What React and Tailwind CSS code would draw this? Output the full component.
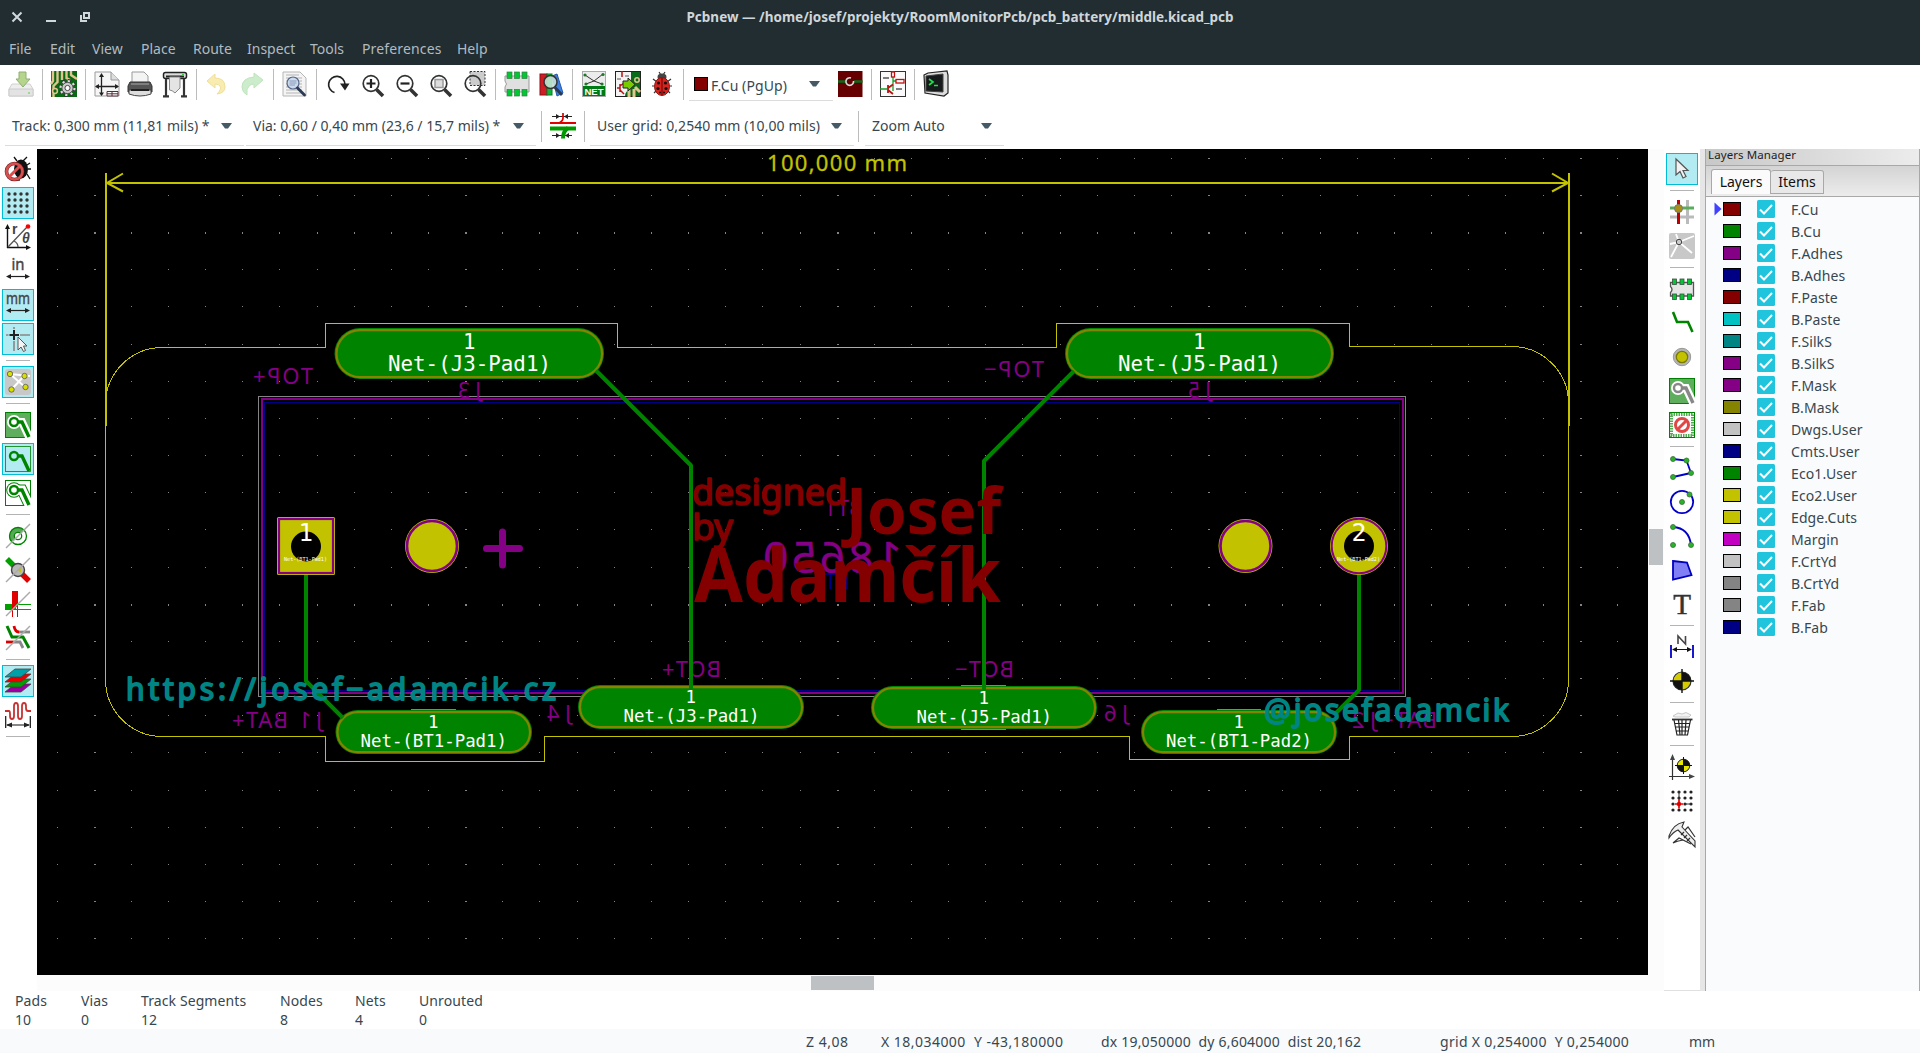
import React from "react";

const G = "#008400";
const Y = "#c2c200";
const P = "#840084";

/* ---------- small icon helpers ---------- */
function Ic({ children, s = 26 }) {
  return (
    <svg width={s} height={s} viewBox="0 0 26 26" fill="none" className="shrink-0 overflow-visible">
      {children}
    </svg>
  );
}
const HSlot = ({ children }) => <div className="flex h-[34px] w-[34px] shrink-0 items-center justify-center">{children}</div>;
const HSep = () => <div className="flex w-[9px] shrink-0 justify-center"><div className="h-[31px] w-px bg-[#bcbcbc]" /></div>;
const VSep = () => <div className="flex h-[9px] shrink-0 items-center justify-center"><div className="h-px w-6 bg-[#b4b4b4]" /></div>;
const VSlot = ({ children, on }) => (
  <div className="flex h-[34px] w-full shrink-0 items-center justify-center">
    <div className={on ? "flex h-8 w-8 items-center justify-center border border-[#00bcd4] bg-[#b2ebf2]" : "flex h-8 w-8 items-center justify-center"}>
      {children}
    </div>
  </div>
);
const Arrow = () => (
  <svg width="11" height="6" viewBox="0 0 11 6" className="shrink-0"><path d="M0 0H11L7 5.5H4Z" fill="#455a64" /></svg>
);

/* ---------- top toolbar icons ---------- */
const Save = () => (
  <Ic>
    <path d="M4 13H22L25 18V25H1V18Z" fill="#eee" stroke="#d0d0d0" />
    <path d="M1 18H25V25H1Z" fill="#e3e3e3" stroke="#ccc" />
    <path d="M11 1H18V8H22L15 16L8 8H11Z" fill="#b5d58c" stroke="#8fae70" />
    <rect x="20" y="21" width="2" height="2" fill="#9edb8e" />
  </Ic>
);
const BoardSetup = () => (
  <Ic>
    <rect width="26" height="26" fill="#0a6a14" />
    <path d="M2 0V10L0 13M6.500 0V11L2.500 15V26M11 0V9M15.500 0V7L19 9M20 0V4L26 8" stroke="#e2c48f" strokeWidth="2.400" />
    <circle cx="4" cy="20" r="2.400" fill="#0a6a14" stroke="#e2c48f" strokeWidth="1.500" />
    <circle cx="16.500" cy="17" r="7" stroke="#333" strokeWidth="4" strokeDasharray="3 2.500" />
    <circle cx="16.500" cy="17" r="6.800" stroke="#ddd" strokeWidth="2.600" strokeDasharray="2.200 3.140" />
    <circle cx="16.500" cy="17" r="5.600" fill="#ccc" stroke="#555" />
    <circle cx="16.500" cy="17" r="2.600" fill="#fff" stroke="#444" />
  </Ic>
);
const PageIc = () => (
  <Ic>
    <path d="M1 1H17L25 9V25H1Z" fill="#f6f6f6" stroke="#999" />
    <path d="M17 1V9H25" fill="#ddd" stroke="#999" />
    <path d="M7.500 4V24M2 15.500H24" stroke="#222" strokeWidth="1.300" />
    <path d="M7.500 2L5 6H10ZM7.500 25L5 21.500H10ZM1 15.500L5 13V18ZM25 15.500L21 13V18Z" fill="#222" />
    <path d="M13 20.500H24V25H13ZM13 22.800H24M18 20.500V25" stroke="#5a2a3a" fill="#fff" />
  </Ic>
);
const Printer = () => (
  <Ic>
    <path d="M4 12V1H16L20 5V12Z" fill="#f4f4f4" stroke="#999" />
    <path d="M2 11H22L24 15V21H0V15Z" fill="#555" stroke="#333" />
    <path d="M3 13H21" stroke="#aaa" />
    <path d="M1 19H23V23Q12 27 1 23Z" fill="#ddd" stroke="#444" />
    <path d="M3 19H21" stroke="#222" strokeWidth="2" />
  </Ic>
);
const Plotter = () => (
  <Ic>
    <rect x="1.500" y="1.500" width="23" height="6" rx="2" fill="#ddd" stroke="#222" strokeWidth="1.500" />
    <path d="M4 5.500H22" stroke="#222" strokeWidth="2" />
    <path d="M4 8V25M22 8V25M1 25.300H7M19 25.300H25" stroke="#333" strokeWidth="2.200" />
    <path d="M7.500 6H18V17L13 22Q10 19 7.500 19Z" fill="#e4e4e4" stroke="#888" />
    <rect x="20" y="3" width="2" height="2" fill="#3c3" />
  </Ic>
);
const Undo = () => (
  <Ic>
    <path d="M2 10L10 3V7Q20 7 20 16Q20 22 12 23Q17 18 15 15Q14 13 10 13V17Z" fill="#f8ecb0" stroke="#efdf98" />
  </Ic>
);
const Redo = () => (
  <Ic>
    <path d="M24 9L15 2V6Q3 7 3 16Q3 21 8 24Q7 18 10 15Q12 13 15 13V17Z" fill="#cdeccb" stroke="#bfe3bd" />
  </Ic>
);
const FindIc = () => (
  <Ic>
    <path d="M1 1H18L24 7V25H1Z" fill="#f4f4f4" stroke="#b5b5b5" />
    <path d="M4 4H17M4 7H20M4 10H20M4 13H20M4 16H20M4 19H20M4 22H20" stroke="#b4b4b4" />
    <circle cx="11" cy="12" r="6" fill="#c9d8ee" fillOpacity=".9" stroke="#56678a" strokeWidth="1.200" />
    <path d="M7.500 10H14.500M7.500 12H14.500M7.500 14H13" stroke="#8a9cbd" />
    <path d="M15.500 17L22.500 24" stroke="#2a3a55" strokeWidth="2.800" strokeLinecap="round" />
  </Ic>
);
const Redraw = () => (
  <Ic>
    <path d="M9.500 21.500A8.200 8.200 0 1 1 20 13.500" stroke="#222" strokeWidth="1.700" />
    <path d="M15 12.500H24.500L20 19.500Z" fill="#222" />
  </Ic>
);
const Mag = ({ kind }) => (
  <Ic>
    <g transform="translate(1.500 0)">
      {kind === "sel" && <rect x="7.500" y=".5" width="15" height="14" fill="#ccc" stroke="#333" strokeDasharray="2 1.500" />}
      <circle cx="10.500" cy="12.500" r="7.800" fill={kind === "sel" ? "none" : "#fff"} stroke="#333" strokeWidth="1.700" />
      {kind === "in" && <path d="M6 12.500H15M10.500 8V17" stroke="#222" strokeWidth="2.200" />}
      {kind === "out" && <path d="M6 12.500H15" stroke="#222" strokeWidth="2.200" />}
      {kind === "fit" && <rect x="6.500" y="8.500" width="8" height="8" fill="#ddd" stroke="#999" strokeWidth="1.500" />}
      <path d="M16 18.500L22.500 25" stroke="#333" strokeWidth="3.600" />
    </g>
  </Ic>
);
const Chip = () => (
  <Ic>
    <path d="M1.500 6.500H24.500V20H1.500V16.500Q4.500 13.500 1.500 10.500Z" fill="#e6e6e6" stroke="#555" strokeWidth="1.300" />
    {[3.500, 11, 18.500].map((x) => (
      <g key={x} fill="#00c832" stroke="#38503f" strokeWidth=".8"><rect x={x} y="3" width="4" height="5.500" /><rect x={x} y="18" width="4" height="5.500" /></g>
    ))}
  </Ic>
);
const FpChip = () => (
  <Ic>
    <path d="M1 5H25V21H1V16Q4 13 1 10Z" fill="#e0e0e0" stroke="#999" />
    {[3, 10.500, 18].map((x) => (
      <g key={x} fill="#00c832" stroke="#3b7a48" strokeWidth=".7"><rect x={x} y="1" width="5" height="6.500" /><rect x={x} y="18.500" width="5" height="6.500" /></g>
    ))}
  </Ic>
);
const Lib = () => (
  <Ic>
    <rect x="2" y="3" width="7" height="21" fill="#d11c24" stroke="#8a1016" />
    <rect x="9" y="3" width="5" height="21" fill="#11b43a" stroke="#0a7a26" />
    <path d="M14 5L19 3L25 22L19 25Z" fill="#3d7fe0" stroke="#2458a8" />
    <circle cx="12.500" cy="11" r="6.500" fill="#cfe6dc" fillOpacity=".85" stroke="#333" strokeWidth="1.500" />
    <path d="M17 16.500L24 24" stroke="#2a3a55" strokeWidth="3" />
  </Ic>
);
const NetIc = () => (
  <Ic>
    <rect x="1.500" y=".5" width="23" height="25" fill="#ececec" stroke="#aaa" />
    <path d="M4 4L13 10L22 3M13 10L5 13M13 10L21 13" stroke="#333" />
    <g fill="#1a7a2a"><circle cx="4" cy="4" r="1.600" /><circle cx="22" cy="3.500" r="1.600" /><circle cx="5" cy="13" r="1.600" /><circle cx="21" cy="13" r="1.600" /></g>
    <rect x="2" y="15" width="22" height="10" fill="#007a14" />
    <text x="13" y="23.500" fontSize="9.500" textAnchor="middle" fill="#fff" fontFamily="Liberation Sans" fontWeight="bold">NET</text>
  </Ic>
);
const Update = () => (
  <Ic>
    <rect x=".5" y=".5" width="25" height="25" fill="#f4f4f4" stroke="#222" />
    <path d="M16 1H25V25H10Q10 20 16 18Z" fill="#076b17" />
    <path d="M14 19V26M19 18V26M25 21L20 16" stroke="#e2c48f" strokeWidth="3" />
    <path d="M7 0V6M2 17H5M5 13V21M5 15L9 12M5 19L9 23" stroke="#b11" strokeWidth="1.500" />
    <path d="M2 8H6M10 5H14" stroke="#555" />
    <path d="M8 10H13V7L20 13.500L13 20V17H8Z" fill="#7c0" stroke="#222" />
    <circle cx="22" cy="9" r="2.200" stroke="#e2c48f" strokeWidth="1.500" />
  </Ic>
);
const Bug = () => (
  <Ic>
    <path d="M4 8L8 11M22 8L18 11M3 15H8M23 15H18M5 22L8 19M21 22L18 19M10 1L12 4M16 1L14 4" stroke="#333" strokeWidth="1.200" />
    <ellipse cx="13" cy="6" rx="4.500" ry="3.500" fill="#444" />
    <ellipse cx="13" cy="15.500" rx="7.500" ry="9" fill="#d8241f" stroke="#8c1512" />
    <path d="M13 7V24" stroke="#600" />
    <g fill="#111"><circle cx="9.500" cy="12" r="1.600" /><circle cx="16.500" cy="12" r="1.600" /><circle cx="9" cy="17.500" r="1.600" /><circle cx="17" cy="17.500" r="1.600" /><circle cx="11" cy="21.500" r="1" /><circle cx="15" cy="21.500" r="1" /></g>
  </Ic>
);
const LayerPair = () => (
  <Ic>
    <rect x="1" y="0" width="24.500" height="26" fill="#660000" />
    <path d="M1 10.500H9M17 10.500H25.500" stroke="#0a6a1a" strokeWidth="2.500" />
    <path d="M14 7A3.800 3.800 0 1 0 16.500 10" stroke="#d8d8d8" strokeWidth="1.600" />
  </Ic>
);
const Schematic = () => (
  <Ic>
    <rect x=".5" y=".5" width="25" height="25" fill="#fafafa" stroke="#333" />
    <path d="M13 0V20M0 18H7M13 10H24" stroke="#1a9a2a" strokeWidth="1.300" />
    <rect x="11.500" y="1" width="3" height="5" fill="#fff" stroke="#b11" strokeWidth="1.300" />
    <rect x="16" y="8.500" width="8" height="3.500" fill="#fff" stroke="#b11" strokeWidth="1.300" />
    <path d="M8 14V22M8 17L13 13.500M8 19L13 23" stroke="#b11" strokeWidth="1.800" />
    <path d="M3 7H9M16 18H22" stroke="#555" strokeWidth="1.300" />
  </Ic>
);
const Term = () => (
  <Ic>
    <path d="M1 4L5 2L24 0L25 4V22L21 25L2 22Z" fill="#ddd" stroke="#222" strokeWidth="1.200" />
    <path d="M3 5L20 3V21L3 20Z" fill="#161a1b" stroke="#444" />
    <path d="M6 8L10 11L6 14M11 14.500H15" stroke="#1ee04a" strokeWidth="1.700" />
  </Ic>
);
const TrackW = () => (
  <Ic>
    <path d="M2 3.500H22M2 22.500H22" stroke="#222" />
    <path d="M10 3.500L6 1V6ZM14 3.500L18 1V6ZM10 22.500L6 20V25ZM15 22.500L19 20V25Z" fill="#222" />
    <path d="M0 10H26" stroke="#e00000" strokeWidth="2" />
    <path d="M13 0V5Q13 8 9 10" stroke="#e00000" strokeWidth="1.700" />
    <path d="M0 15.500H26" stroke="#009a00" strokeWidth="4" />
    <path d="M18 15Q13 18 13 25.500" stroke="#009a00" strokeWidth="4" />
  </Ic>
);

/* ---------- left toolbar icons ---------- */
const NoDrc = () => (
  <Ic>
    <path d="M12 5L9 1M18 5L22 1M22 9L25 7M23 13H26M22 18L25 23M14 22V25" stroke="#111" strokeWidth="1.300" />
    <ellipse cx="16" cy="13" rx="7" ry="9.500" fill="#111" />
    <circle cx="9.500" cy="15.500" r="8" stroke="#7a2020" strokeWidth="3.600" fill="none" />
    <circle cx="9.500" cy="15.500" r="8" stroke="#d65050" strokeWidth="2.600" fill="none" />
    <path d="M4 21L15 10" stroke="#d65050" strokeWidth="3" />
  </Ic>
);
const GridIc = () => (
  <Ic>{[4, 10, 16, 22].map((x) => [4, 10, 16, 22].map((y) => <circle key={x + "-" + y} cx={x} cy={y} r="1.700" fill="#333" />))}</Ic>
);
const Polar = () => (
  <Ic>
    <path d="M2.500 24V4M2 23.500H23" stroke="#111" strokeWidth="1.400" />
    <path d="M2.500 0L0 5H5ZM26 23.500L21 21V26Z" fill="#111" />
    <path d="M3 23L22 3M9 17Q13 19 13 23" stroke="#555" strokeWidth="1.300" />
    <circle cx="23" cy="2.500" r="2.300" fill="#f00" />
    <text x="7" y="9.500" fontSize="14" fontWeight="bold" fill="#444" fontFamily="Liberation Sans">r</text>
    <text x="17" y="19" fontSize="14" fontWeight="bold" fontStyle="italic" fill="#444" fontFamily="Liberation Sans">θ</text>
  </Ic>
);
const Unit = ({ t, w }) => (
  <Ic>
    <text x={13 - w / 2} y="12" fontSize="15.500" textLength={w} lengthAdjust="spacingAndGlyphs" fill="#444" stroke="#444" strokeWidth=".4" fontFamily="Noto Sans">{t}</text>
    <path d="M3 18.500H23" stroke="#222" strokeWidth="1.200" />
    <path d="M1 18.500L6 16V21ZM25 18.500L20 16V21Z" fill="#222" />
  </Ic>
);
const CursorIc = () => (
  <Ic>
    <path d="M1 9H3.500M15 9H25" stroke="#888" strokeWidth="1.600" />
    <path d="M4.500 9H14M9 4V14" stroke="#222" strokeWidth="2" />
    <path d="M9 1V3M9 15V25" stroke="#888" strokeWidth="1.600" />
    <path d="M13 11V24L16 21L18.500 25.500L20.500 24.500L18.500 20H22Z" fill="#f4f4f4" stroke="#555" />
  </Ic>
);
const Rats = () => (
  <Ic>
    <rect width="26" height="26" rx="3" fill="#c8c8c8" />
    <path d="M5 5L20 18M19 7L7 20M5 5L25 7" stroke="#fff" strokeWidth="2" />
    {[[5, 5], [19.500, 7], [20.500, 18], [6.500, 20.500]].map(([a, b]) => <circle key={a} cx={a} cy={b} r="2.700" fill="#d8e000" stroke="#555" strokeWidth=".8" />)}
  </Ic>
);
const Zone = ({ mode }) => {
  const c = mode === "add" ? "#888" : G;
  return (
    <svg width="26" height="26" viewBox="0 0 26 26" fill="none" className="shrink-0">
      <rect x=".5" y=".5" width="25" height="25" fill={mode === "fill" || mode === "add" ? "#5eae5e" : mode === "out" ? "#fff" : "none"} stroke="#008000" strokeWidth={mode === "none" ? 0.8 : 1} />
      {mode === "out" && <g><path d="M9 10H17L25 27" stroke={G} strokeWidth="11" /><circle cx="9" cy="10" r="7.800" fill={G} /><path d="M9 10H17L25 27" stroke="#fff" strokeWidth="9" /><circle cx="9" cy="10" r="6.800" fill="#fff" /></g>}
      {(mode === "fill" || mode === "add") && <g><path d="M9 10H17L25 27" stroke="#fff" strokeWidth="8" /><circle cx="9" cy="10" r="7" fill="#fff" /></g>}
      <path d="M12 10H17L24 25" stroke={c} strokeWidth="3.400" />
      <circle cx="9" cy="10" r="4" stroke={c} strokeWidth="2.400" fill={mode === "none" ? "#b2ebf2" : "#fff"} />
    </svg>
  );
};
const Slash = () => <path d="M1 25L25 1" stroke="#aaa" strokeWidth="1.400" />;
const PadSk = () => (
  <Ic>
    <path d="M13 4A9 9 0 0 0 6.500 19L19.500 7Z" fill="#57a957" />
    <circle cx="13" cy="13" r="8.500" stroke={G} strokeWidth="1.300" />
    <circle cx="13" cy="13" r="3.700" stroke={G} strokeWidth="1.300" fill="#fff" />
    <Slash />
  </Ic>
);
const ViaSk = () => (
  <Ic>
    <path d="M2 2L13 13" stroke="#00a000" strokeWidth="5.500" />
    <path d="M13 13L24 24" stroke="#e00000" strokeWidth="5.500" />
    <circle cx="13" cy="13" r="6.500" fill="#b8b8b8" stroke="#444" strokeWidth="1.400" />
    <path d="M13 13L17 10L15.500 16Z" fill={Y} />
    <Slash />
  </Ic>
);
const TrkSk = () => (
  <Ic>
    <path d="M0 16H11" stroke="#00a000" strokeWidth="6" />
    <path d="M10 0V16" stroke="#e00000" strokeWidth="6" />
    <path d="M7.500 16V26M12.500 16V26" stroke="#e00000" />
    <path d="M11 13.500H26M11 18.500H26" stroke="#00a000" />
    <Slash />
  </Ic>
);
const HiC = () => (
  <Ic>
    <path d="M2 1L7 12H18L24 23" stroke={G} strokeWidth="3" />
    <path d="M9 1Q10 7 14 7" stroke="#d00" strokeWidth="2.800" /><path d="M14 7H25" stroke="#888" strokeWidth="2.800" />
    <path d="M1 17H8" stroke="#d00" strokeWidth="2.800" /><path d="M8 17H15L18 23" stroke="#888" strokeWidth="2.800" />
    <Slash />
  </Ic>
);
const LayersIc = () => (
  <Ic>
    {[["#9a00a0", 16], ["#00a000", 11], ["#e80000", 6], ["#00a0a8", 1]].map(([c, y]) => (
      <path key={c} d={`M10 ${y}H26L16 ${y + 8}H0Z`} fill={c} stroke="#444" strokeWidth=".8" />
    ))}
  </Ic>
);
const Meander = () => (
  <Ic>
    <path d="M0 9H4Q5 9 5 12V14Q5 17 7 17T9 14V4Q9 1 11 1T13 4V14Q13 17 15 17T17 14V4Q17 1 19 1T21 4V6Q21 9 23 9H26" stroke="#c83232" strokeWidth="1.800" />
    <path d="M.7 14V26M25.300 14V26M2 23H24" stroke="#111" strokeWidth="1.200" />
    <path d="M1 23L7 20.500V25.500ZM25 23L19 20.500V25.500Z" fill="#222" />
  </Ic>
);

/* ---------- right toolbar icons ---------- */
const Pointer = () => <Ic><path d="M7 3V19L11 15.500L14 22L17 20.500L14 14.500H19Z" fill="#f2f2f2" stroke="#555" strokeWidth="1.200" /></Ic>;
const HiNet = () => (
  <Ic>
    <path d="M18.500 1V25M1 18H25" stroke="#bbb" strokeWidth="3" /><path d="M1 9H25" stroke="#5aae5a" strokeWidth="3" />
    <path d="M9.500 1V25" stroke="#c00000" strokeWidth="3" /><circle cx="9.500" cy="9.500" r="4" fill="#a89018" stroke="#777" />
  </Ic>
);
const LocalRats = () => (
  <Ic>
    <rect width="26" height="26" rx="2" fill="#c8c8c8" /><path d="M10 9L7 1M10 9L1 11M10 9L25 3M10 9L23 20M10 9L2 24" stroke="#fff" strokeWidth="1.800" />
    <circle cx="10" cy="9" r="2.700" fill="#ccc" stroke="#444" />
  </Ic>
);
const Route = () => <Ic><path d="M4 2L8 12H19L23.500 22" stroke={G} strokeWidth="2.600" /></Ic>;
const Via = () => <Ic><circle cx="13" cy="13" r="8.700" fill="#b4b4b4" stroke="#999" /><circle cx="13" cy="13" r="5.700" fill={Y} stroke="#7a7a00" strokeWidth="1.300" /></Ic>;
const Keepout = () => (
  <Ic>
    <rect x="2" y="2" width="22" height="22" fill="#fff" stroke="#53ac53" strokeWidth="4" strokeDasharray="1.500 1" /><rect x=".5" y=".5" width="25" height="25" stroke={G} />
    <circle cx="13" cy="13" r="6.500" stroke="#e04848" strokeWidth="3" fill="#fff" /><path d="M8.500 17.500L17.500 8.500" stroke="#e04848" strokeWidth="3" />
  </Ic>
);
const Nd = ({ p }) => p.map(([x, y]) => <circle key={x + "_" + y} cx={x} cy={y} r="2.500" fill="#28b428" stroke="#3c6a3c" strokeWidth=".8" />);
const Line = () => <Ic><path d="M4 4L17.500 5.500L22 18L4 22" stroke="#0000c8" strokeWidth="1.800" /><Nd p={[[4, 4], [17.500, 5.500], [22, 18], [4, 22]]} /></Ic>;
const Circ = () => <Ic><circle cx="13" cy="13" r="11.200" stroke="#0000c8" strokeWidth="1.800" /><Nd p={[[13, 13], [20.500, 5.500]]} /></Ic>;
const ArcIc = () => <Ic><path d="M4 4Q20 5 22 22" stroke="#0000c8" strokeWidth="1.800" /><Nd p={[[4, 4], [4, 22], [22, 22]]} /></Ic>;
const Poly = () => <Ic><path d="M4 4L18 5.500L22.500 18L4 22.500Z" fill="#8080f4" stroke="#0000c0" strokeWidth="1.800" /></Ic>;
const TextIc = () => <Ic><text x="13" y="23" fontSize="29" textAnchor="middle" fill="#333" stroke="#333" strokeWidth=".5" fontFamily="Liberation Serif">T</text></Ic>;
const Dim = () => (
  <Ic>
    <path d="M9 10V2L16.500 10V2" stroke="#444" strokeWidth="1.600" /><path d="M2 11V24M24 11V24" stroke="#0000c8" strokeWidth="1.800" />
    <path d="M4 15.500H22" stroke="#111" /><path d="M3 15.500L8 13V18ZM23 15.500L18 13V18Z" fill="#111" />
  </Ic>
);
const Target = () => (
  <Ic>
    <circle cx="13" cy="13" r="9" fill="#d4cc00" stroke="#333" strokeWidth="1.200" />
    <path d="M13 13V4A9 9 0 0 1 22 13ZM13 13V22A9 9 0 0 1 4 13Z" fill="#111" /><path d="M13 1V25M1 13H25" stroke="#111" strokeWidth="1.400" />
  </Ic>
);
const Trash = () => (
  <Ic>
    <path d="M4 5L9 2L13 3L17 1.500L22 4L20 6H6Z" fill="#f3f3f3" stroke="#bbb" strokeWidth=".8" /><path d="M3 8.500H23.500" stroke="#333" strokeWidth="1.800" />
    <path d="M5 9L8 24H18.500L21.500 9M9.500 9L11 24M13 9V24M17 9L16 24M5.500 12.500H21M6.500 16H20M7 20H19.500" stroke="#222" strokeWidth="1.200" />
  </Ic>
);
const Origin = () => (
  <Ic>
    <path d="M3.500 26V4M0 22.500H22" stroke="#333" strokeWidth="1.200" /><path d="M3.500 0L1 6H6ZM26 22.500L20 20V25Z" fill="#444" />
    <circle cx="14.500" cy="11.500" r="6.300" fill="#e8e800" stroke="#222" /><path d="M14.500 11.500V5.200A6.300 6.300 0 0 1 20.800 11.500ZM14.500 11.500V17.800A6.300 6.300 0 0 1 8.200 11.500Z" fill="#111" />
    <path d="M14.500 3V20M6 11.500H23" stroke="#111" />
  </Ic>
);
const GridOrg = () => (
  <Ic>
    {[4, 10, 16, 22].map((x) => [4, 10, 16, 22].map((y) => <circle key={x + "-" + y} cx={x} cy={y} r="1.600" fill="#222" />))}
    <path d="M10 3V12M16 16H22" stroke="#333" /><path d="M10 11.500V20.500M6 16H14" stroke="#e00" strokeWidth="1.700" /><circle cx="10" cy="16" r="2.200" fill="#d00" />
  </Ic>
);
const Caliper = () => (
  <Ic>
    <path d="M0 14Q4 2 15 0L13 5L26 19V25L9 8Q4 10 0 16Z" fill="#eee" stroke="#333" strokeWidth="1.100" />
    <path d="M16 8L19 5L26 15M4 21L10 16L22 22M4 21Q8 19 14 18M12 13L15 10M15 16L18 13M18 19L21 16" stroke="#333" strokeWidth="1.200" />
  </Ic>
);

/* ---------- board drawing ---------- */
function Txt({ x, x2, y, s, children, fill = "#fff", mirror, sw = 0, weight, font = "Noto Sans", adjust = "spacingAndGlyphs" }) {
  return (
    <text
      x={mirror ? 0 : x} y={mirror ? 0 : y} fontSize={s} fill={fill} stroke={fill} strokeWidth={sw} strokeLinejoin="round"
      fontWeight={weight} fontFamily={font} textLength={x2 - x} lengthAdjust={adjust}
      transform={mirror ? `translate(${x2} ${y}) scale(-1 1)` : undefined}
    >{children}</text>
  );
}
const Silk = (p) => <Txt mirror fill={P} s={22} adjust="spacing" {...p} />;
const PadTxt = (p) => <Txt font="DejaVu Sans Mono" {...p} />;
function Oval({ x, y, x2, y2 }) {
  return (
    <g>
      <rect x={x} y={y} width={x2 - x} height={y2 - y} rx={(y2 - y) / 2} fill={G} />
      <rect x={x + 2} y={y + 2.200} width={x2 - x - 4} height={y2 - y - 4} rx={(y2 - y - 4) / 2} fill="none" stroke="#848400" strokeWidth="2.200" />
    </g>
  );
}
function Dots() {
  const out = [];
  for (let j = 0; j < 22; j++)
    for (let i = 0; i < 43; i++)
      out.push(<rect key={i + "," + j} x={Math.floor(57 + 37.15 * i)} y={Math.floor(158.1 + 37.18 * j)} width={i % 10 === 1 ? 2 : 1} height={j % 10 === 2 ? 2 : 1} />);
  return <g fill="#848484" shapeRendering="crispEdges">{out}</g>;
}
const OUTLINE =
  "M105.500 404.500A57 57 0 0 1 162.500 347.500H325.500V323.500H617.500V347.500H1056.500V323.500H1349.500V346.500H1511.500A57 57 0 0 1 1568.500 403.500V679.500A57 57 0 0 1 1511.500 736.500H1349.500V759.500H1129.500V736.500H544.500V761.500H325.500V736.500H162.500A57 57 0 0 1 105.500 679.500Z";

function Board() {
  return (
    <svg width="1611" height="826" viewBox="37 149 1611 826" className="block shrink-0 bg-black">
      <Dots />
      <g fill="none" shapeRendering="crispEdges">
        <rect x="258.500" y="396.500" width="1147" height="300" stroke="#848484" />
        <rect x="262" y="399" width="1141" height="294" stroke={P} strokeWidth="2" />
        <rect x="264.500" y="402.500" width="1135" height="288" stroke="#000084" />
        <path d="M411 709.500H456M961 685.500H1006M961 729.500H1006M1217 709.500H1261" stroke="#848484" />
        <path d={OUTLINE} stroke={Y} />
      </g>
      <g stroke={Y} strokeWidth="2" fill="none">
        <path d="M106 173V426M1569 173V426M106 183H1569M123 173.500L107 183L123 191.500M1552 173.500L1568 183L1552 191.500" />
      </g>
      <Txt x={767} x2={907} y={171} s={22} fill={Y} sw={0.300} adjust="spacing">100,000 mm</Txt>

      <Oval x={334.500} y={328} x2={604} y2={379} />
      <Oval x={1065} y={328} x2={1334} y2={379} />
      <Oval x={335.500} y={710} x2={532} y2={754} />
      <Oval x={578} y={685} x2={804} y2={729} />
      <Oval x={871} y={686} x2={1097} y2={729} />
      <Oval x={1141} y={710} x2={1337} y2={754} />

      <Silk x={253} x2={313} y={384}>TOP+</Silk>
      <Silk x={984} x2={1044} y={376.500}>TOP−</Silk>
      <Silk x={458} x2={481} y={398} s={21}>J3</Silk>
      <Silk x={1188} x2={1211} y={398} s={21}>J5</Silk>
      <Silk x={662} x2={721} y={677}>BOT+</Silk>
      <Silk x={955} x2={1014} y={677}>BOT−</Silk>
      <Silk x={232} x2={288} y={728}>BAT+</Silk>
      <Silk x={299} x2={322} y={728}>J1</Silk>
      <Silk x={547} x2={571} y={721}>J4</Silk>
      <Silk x={1104} x2={1128} y={721}>J6</Silk>
      <Silk x={1381} x2={1437} y={728}>BAT−</Silk>
      <Silk x={1352} x2={1376} y={728}>J2</Silk>
      <Silk x={825} x2={863} y={516} s={21}>BT1</Silk>
      <Silk x={763} x2={902} y={572.500} s={44} sw={0.500}>18650</Silk>
      <Txt mirror x={813} x2={850} y={589} s={21} fill="#000084">BT1</Txt>
      <path d="M486.500 548.500H519.500M502.500 532V565" stroke={P} strokeWidth="7" strokeLinecap="round" />

      <g stroke={G} strokeWidth="4" fill="none" strokeLinejoin="round">
        <path d="M596 370.500L691 465.500V690M1074 371L984 461V690M306 574V681L343 718M1359 574V690L1336 713" />
      </g>

      <rect x="277" y="517" width="58" height="58" rx="1.500" fill={Y} />
      <rect x="279" y="519" width="54" height="54" fill="none" stroke={P} strokeWidth="2.200" />
      <circle cx="306" cy="546.500" r="15" fill="#000" />
      <circle cx="432" cy="546" r="27" fill={Y} /><circle cx="432" cy="546" r="25" fill="none" stroke={P} strokeWidth="2.600" />
      <circle cx="1245.500" cy="546" r="27" fill={Y} /><circle cx="1245.500" cy="546" r="25" fill="none" stroke={P} strokeWidth="2.600" />
      <circle cx="1359" cy="546" r="29" fill={Y} /><circle cx="1359" cy="546" r="27.300" fill="none" stroke={P} strokeWidth="2" />
      <circle cx="1359" cy="546" r="15" fill="#000" />
      <PadTxt x={298.500} x2={313} y={541} s={24}>1</PadTxt>
      <PadTxt x={1351.500} x2={1366.500} y={541} s={24}>2</PadTxt>
      <PadTxt x={284} x2={327} y={561} s={5.500}>Net-(BT1-Pad1)</PadTxt>
      <PadTxt x={1337} x2={1380} y={561} s={5.500}>Net-(BT1-Pad2)</PadTxt>

      <PadTxt x={463} x2={475.500} y={349} s={21}>1</PadTxt>
      <PadTxt x={388} x2={551} y={371} s={21}>Net-(J3-Pad1)</PadTxt>
      <PadTxt x={1193} x2={1205.500} y={349} s={21}>1</PadTxt>
      <PadTxt x={1118} x2={1281} y={371} s={21}>Net-(J5-Pad1)</PadTxt>
      <PadTxt x={685.500} x2={696} y={703} s={17.500}>1</PadTxt>
      <PadTxt x={623.500} x2={759.500} y={722} s={17.500}>Net-(J3-Pad1)</PadTxt>
      <PadTxt x={978.500} x2={989} y={704} s={17.500}>1</PadTxt>
      <PadTxt x={916.500} x2={1052} y={723} s={17.500}>Net-(J5-Pad1)</PadTxt>
      <PadTxt x={428} x2={438.500} y={728} s={17.500}>1</PadTxt>
      <PadTxt x={360.500} x2={507} y={747} s={17.500}>Net-(BT1-Pad1)</PadTxt>
      <PadTxt x={1233.500} x2={1244} y={728} s={17.500}>1</PadTxt>
      <PadTxt x={1166} x2={1312} y={747} s={17.500}>Net-(BT1-Pad2)</PadTxt>

      <Txt x={692} x2={847} y={505} s={36} fill="#840000" sw={1.600}>designed</Txt>
      <Txt x={692} x2={733} y={540} s={36} fill="#840000" sw={1.600}>by</Txt>
      <Txt x={846} x2={1001} y={534} s={64} fill="#840000" weight="bold">Josef</Txt>
      <Txt x={694} x2={1001} y={601.500} s={76} fill="#840000" weight="bold">Adamčík</Txt>
      <Txt x={126} x2={556} y={700} s={30} fill="#008484" sw={1.800} adjust="spacing">https://josef−adamcik.cz</Txt>
      <Txt x={1264} x2={1509} y={721} s={30} fill="#008484" sw={1.800} adjust="spacing">@josefadamcik</Txt>
    </svg>
  );
}

/* ---------- data ---------- */
const LAYERS = [
  ["F.Cu", "#840000"], ["B.Cu", "#008400"], ["F.Adhes", "#840084"], ["B.Adhes", "#000084"], ["F.Paste", "#840000"],
  ["B.Paste", "#00c2c2"], ["F.SilkS", "#008484"], ["B.SilkS", "#840084"], ["F.Mask", "#840084"], ["B.Mask", "#848400"],
  ["Dwgs.User", "#c2c2c2"], ["Cmts.User", "#000084"], ["Eco1.User", "#008400"], ["Eco2.User", "#c2c200"], ["Edge.Cuts", "#c2c200"],
  ["Margin", "#c200c2"], ["F.CrtYd", "#c2c2c2"], ["B.CrtYd", "#848484"], ["F.Fab", "#848484"], ["B.Fab", "#000084"],
];

export default function App() {
  return (
    <div className="flex h-[1053px] w-[1920px] flex-col overflow-hidden bg-white font-['Noto_Sans',sans-serif] text-[14px] whitespace-nowrap text-[#37474f]">
      {/* title bar */}
      <header className="h-[65px] shrink-0 bg-[#222d32] text-[#b0bbc0]">
        <div className="grid h-[34px] grid-cols-[1fr_auto_1fr] items-center">
          <svg width="100" height="34" viewBox="0 0 100 34" fill="none">
            <path d="M12.500 12.500L21.500 21.500M21.500 12.500L12.500 21.500" stroke="#d0d8dc" strokeWidth="2" />
            <path d="M46 21H56" stroke="#d0d8dc" strokeWidth="2" />
            <path d="M84 13H89V18H84Z" stroke="#d0d8dc" strokeWidth="2" />
            <path d="M81 15V21H87" stroke="#d0d8dc" strokeWidth="2" />
          </svg>
          <h1 className="text-[13.5px] font-bold tracking-[0.01px] text-[#cfd6d9]">Pcbnew — /home/josef/projekty/RoomMonitorPcb/pcb_battery/middle.kicad_pcb</h1>
          <span />
        </div>
        <nav className="flex h-[30px] items-center pl-[9px] leading-none">
          <span className="w-[41px]">File</span><span className="w-[42px]">Edit</span><span className="w-[49px]">View</span>
          <span className="w-[52px]">Place</span><span className="w-[54px]">Route</span><span className="w-[63px]">Inspect</span>
          <span className="w-[52px]">Tools</span><span className="w-[95px] tracking-[0.15px]">Preferences</span><span>Help</span>
        </nav>
      </header>

      {/* main toolbar */}
      <div className="flex h-[38px] shrink-0 items-center pl-1">
        <HSlot><Save /></HSlot><HSep />
        <HSlot><BoardSetup /></HSlot><HSep />
        <HSlot><PageIc /></HSlot><HSlot><Printer /></HSlot><HSlot><Plotter /></HSlot><HSep />
        <HSlot><Undo /></HSlot><HSlot><Redo /></HSlot><HSep />
        <HSlot><FindIc /></HSlot><HSep />
        <HSlot><Redraw /></HSlot><HSlot><Mag kind="in" /></HSlot><HSlot><Mag kind="out" /></HSlot><HSlot><Mag kind="fit" /></HSlot><HSlot><Mag kind="sel" /></HSlot><HSep />
        <HSlot><FpChip /></HSlot><HSlot><Lib /></HSlot><HSep />
        <HSlot><NetIc /></HSlot><HSlot><Update /></HSlot><HSlot><Bug /></HSlot><HSep />
        <div className="ml-px flex h-[34px] w-[144px] items-center border-b border-[#dcdcdc] pr-[13px] pl-[5px]">
          <span className="mr-[3px] h-[14px] w-[14px] border border-black bg-[#840000]" />
          <span className="flex-1 pt-1 leading-none tracking-[0.1px]">F.Cu (PgUp)</span>
          <Arrow />
        </div>
        <HSlot><LayerPair /></HSlot><HSep /><HSlot><Schematic /></HSlot><HSep /><HSlot><Term /></HSlot>
      </div>

      {/* options toolbar */}
      <div className="flex h-[46px] shrink-0 items-start pt-[5px] pl-[5px]">
        <div className="flex h-[38px] w-[239px] items-center justify-between border-b border-[#dcdcdc] pr-[12px] pb-[2px] pl-[7px]"><span>Track: 0,300 mm (11,81 mils) *</span><Arrow /></div>
        <div className="ml-[2px] flex h-[38px] w-[290px] items-center justify-between border-b border-[#dcdcdc] pr-[12px] pb-[2px] pl-[7px]"><span>Via: 0,60 / 0,40 mm (23,6 / 15,7 mils) *</span><Arrow /></div>
        <div className="ml-px flex h-[36px] items-center"><HSep /><HSlot><TrackW /></HSlot><HSep /></div>
        <div className="ml-px flex h-[38px] w-[264px] items-center justify-between border-b border-[#dcdcdc] pr-[12px] pb-[2px] pl-[7px]"><span className="tracking-[0.08px]">User grid: 0,2540 mm (10,00 mils)</span><Arrow /></div>
        <div className="flex h-[36px] items-center"><HSep /></div>
        <div className="ml-[2px] flex h-[38px] w-[139px] items-center justify-between border-b border-[#dcdcdc] pr-[12px] pb-[2px] pl-[7px]"><span>Zoom Auto</span><Arrow /></div>
      </div>

      {/* work area */}
      <main className="flex h-[842px] shrink-0">
        <aside className="flex w-[37px] flex-col pt-[3px] pr-px">
          <VSlot><NoDrc /></VSlot><VSlot on><GridIc /></VSlot><VSlot><Polar /></VSlot><VSlot><Unit t="in" w={13} /></VSlot>
          <VSlot on><Unit t="mm" w={24} /></VSlot><VSlot on><CursorIc /></VSlot><VSep />
          <VSlot on><Rats /></VSlot><VSep />
          <VSlot><Zone mode="fill" /></VSlot><VSlot on><Zone mode="none" /></VSlot><VSlot><Zone mode="out" /></VSlot><VSep />
          <VSlot><PadSk /></VSlot><VSlot><ViaSk /></VSlot><VSlot><TrkSk /></VSlot><VSlot><HiC /></VSlot><VSep />
          <VSlot on><LayersIc /></VSlot><VSlot><Meander /></VSlot><VSep />
        </aside>
        <div className="flex w-[1611px] flex-col">
          <Board />
          <div className="h-4 bg-[#fcfcfc] pt-px pl-[774px]"><div className="h-[14px] w-[63px] bg-[#bdc1c4]" /></div>
        </div>
        <div className="w-4 bg-[#fcfcfc] pt-[380px] pl-px"><div className="h-9 w-[14px] bg-[#bdc1c4]" /></div>
        <aside className="flex w-9 flex-col border-b border-[#e0e0e0] pt-[3px]">
          <VSlot on><Pointer /></VSlot><VSep />
          <VSlot><HiNet /></VSlot><VSlot><LocalRats /></VSlot><VSep />
          <VSlot><Chip /></VSlot><VSlot><Route /></VSlot><VSlot><Via /></VSlot><VSlot><Zone mode="add" /></VSlot><VSlot><Keepout /></VSlot><VSep />
          <VSlot><Line /></VSlot><VSlot><Circ /></VSlot><VSlot><ArcIc /></VSlot><VSlot><Poly /></VSlot><VSlot><TextIc /></VSlot><VSep />
          <VSlot><Dim /></VSlot><VSlot><Target /></VSlot><VSep />
          <VSlot><Trash /></VSlot><VSep />
          <VSlot><Origin /></VSlot><VSlot><GridOrg /></VSlot><VSlot><Caliper /></VSlot>
        </aside>
        <div className="w-[5px] bg-[#e6e6e6]" />
        <section className="flex w-[215px] flex-col border-x border-[#a8a8a8] bg-[#fafbfd]">
          <div className="h-[16px] bg-gradient-to-r from-[#c8c8c8] to-[#ececec] pl-[2px] text-[11.5px] leading-[11px] tracking-[0.1px] text-[#222]">Layers Manager</div>
          <div className="flex h-[32px] items-end border-t border-[#a8a8a8] border-b bg-gradient-to-b from-[#d4d4d4] to-[#ececec] pb-[2px] pl-[5px] text-[#111]">
            <div className="flex h-[25px] w-[60px] items-center justify-center rounded-t-[3px] border border-b-0 border-[#a8a8a8] bg-[#fbfbfb] pb-[2px]">Layers</div>
            <div className="flex h-[24px] w-[53px] items-center justify-center rounded-t-[3px] border border-l-0 border-[#a8a8a8] bg-[#e8e8e8] pb-px">Items</div>
          </div>
          <ul className="pt-px pl-[8px]">
            {LAYERS.map(([n, c], i) => (
              <li key={n} className="flex h-[22px] items-center">
                <svg width="9" height="14" viewBox="0 0 9 14" className="shrink-0">{i === 0 && <path d="M.5 .5L7.500 7L.5 13.500Z" fill="#4040ff" />}</svg>
                <span className="h-[14px] w-[18px] shrink-0 border border-black" style={{ backgroundColor: c }} />
                <svg width="18" height="18" viewBox="0 0 18 18" className="ml-4 shrink-0"><rect width="18" height="18" rx="1.500" fill="#20c4dc" /><path d="M3 9.500L7 13.500L15 5" stroke="#fff" strokeWidth="2" fill="none" /></svg>
                <span className="ml-[16px] tracking-[0.1px]">{n}</span>
              </li>
            ))}
          </ul>
        </section>
      </main>

      {/* status area */}
      <div className="flex h-[38px] shrink-0 pl-[15px] leading-[19px]">
        {[["Pads", "10", "w-[66px]"], ["Vias", "0", "w-[60px]"], ["Track Segments", "12", "w-[139px]"], ["Nodes", "8", "w-[75px]"], ["Nets", "4", "w-[64px]"], ["Unrouted", "0", "w-[80px]"]].map(([a, b, w]) => (
          <div key={a} className={w}><div className="tracking-[0.1px]">{a}</div><div>{b}</div></div>
        ))}
      </div>
      <footer className="flex h-6 shrink-0 items-center bg-[#f9fafc] pl-[806px]">
        <span className="w-[75px] tracking-[0.5px]">Z 4,08</span>
        <span className="w-[220px] tracking-[0.47px] whitespace-pre">X 18,034000  Y -43,180000</span>
        <span className="w-[339px] tracking-[0.2px] whitespace-pre">dx 19,050000  dy 6,604000  dist 20,162</span>
        <span className="w-[249px] tracking-[0.32px] whitespace-pre">grid X 0,254000  Y 0,254000</span>
        <span>mm</span>
      </footer>
    </div>
  );
}
